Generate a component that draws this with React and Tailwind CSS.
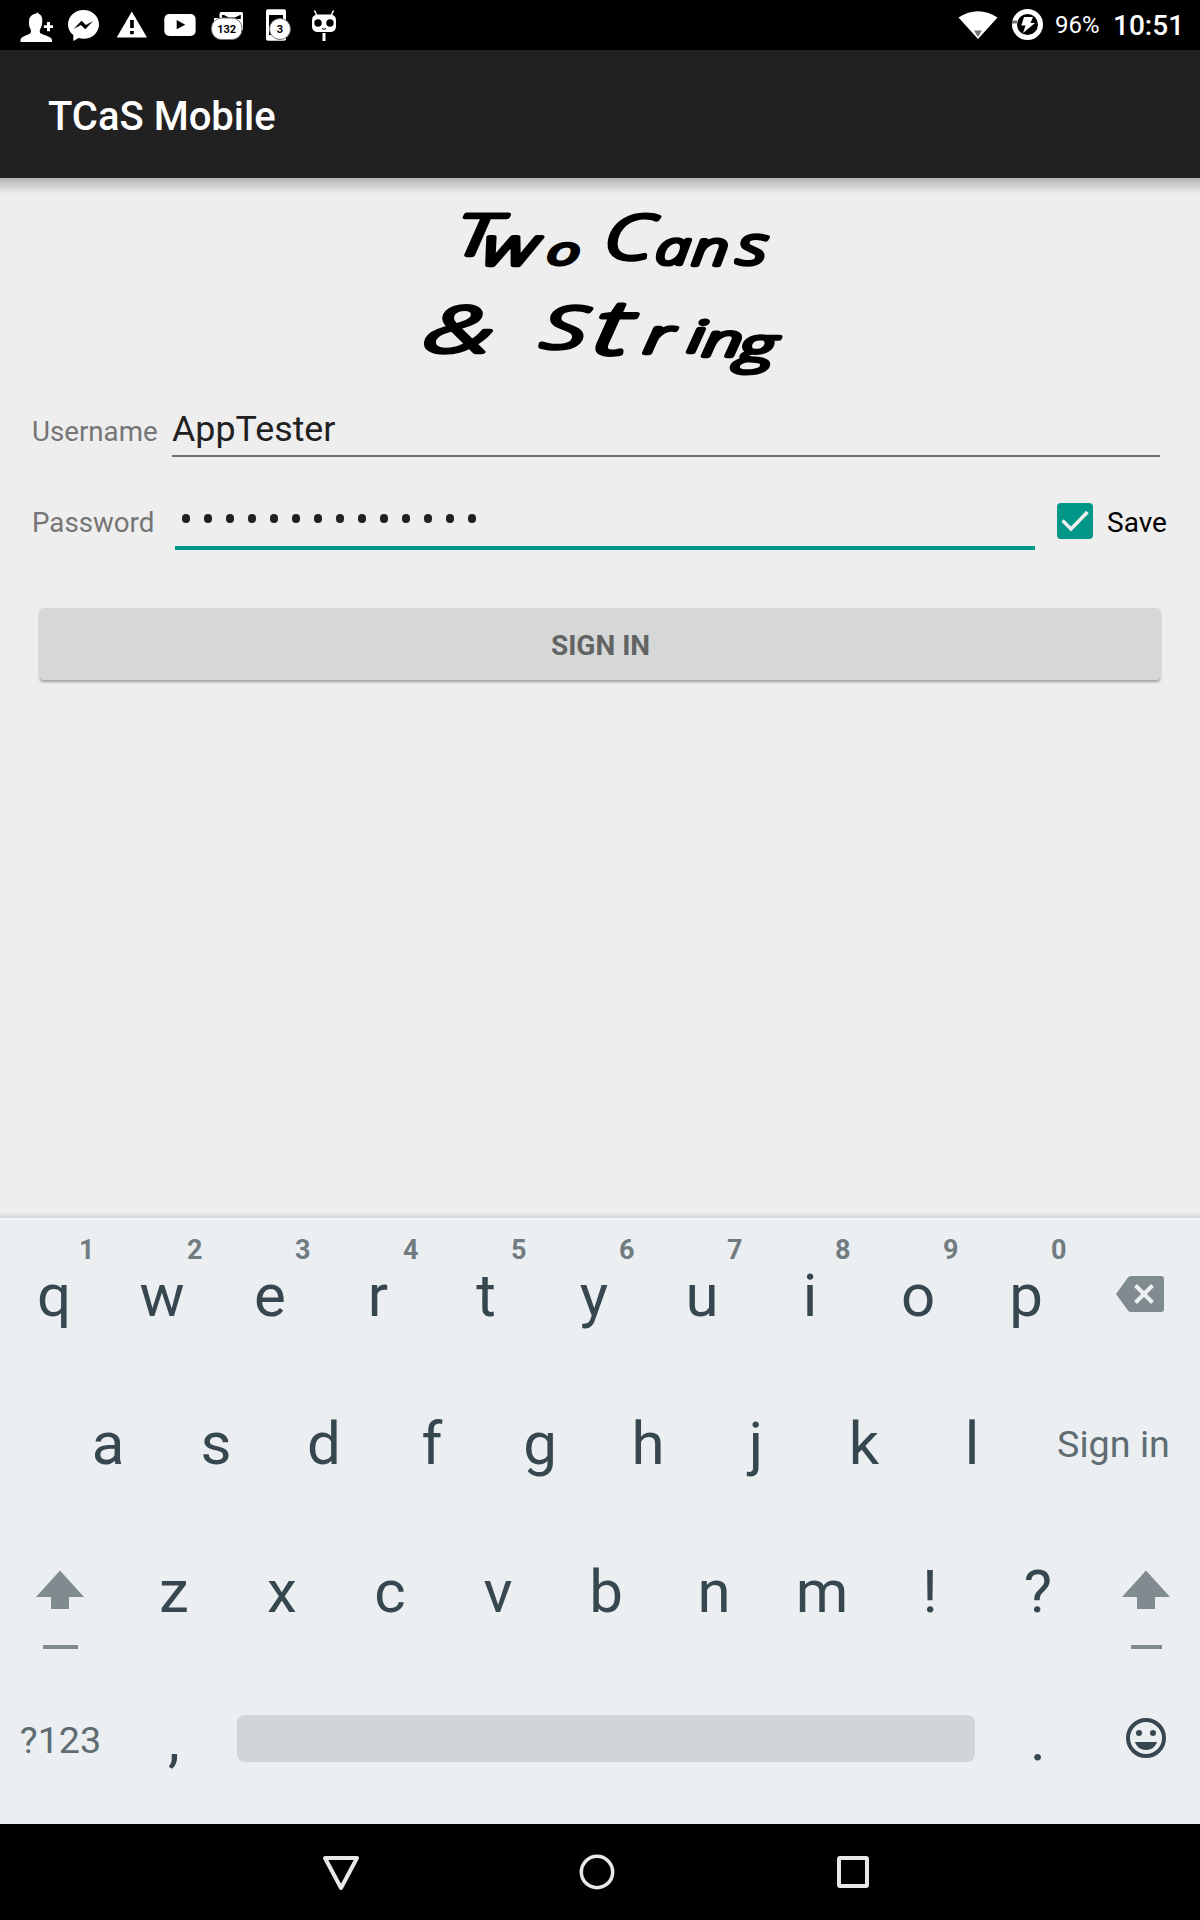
const TOP_ROW = ["q", "w", "e", "r", "t", "y", "u", "i", "o", "p"];
const HOME_ROW = ["a", "s", "d", "f", "g", "h", "j", "k", "l"];
const BOTTOM_ROW = ["z", "x", "c", "v", "b", "n", "m", "!", "?"];

function StatusIcon({ x, children }) {
  return (
    <svg className="h-[50px] w-12 fill-white" viewBox={`${x} 0 48 50`}>
      {children}
    </svg>
  );
}

function StatusBar() {
  return (
    <div className="flex h-[50px] items-center bg-black pl-3 text-white">
      <StatusIcon x={12}>
        <path d="M20.5 42v-2.5c1-3 7-4.500 9.500-6 1.200-.8 1.200-3 .5-4.500-1.200-2-1.700-4.500-1.500-8 .2-4 2.500-6.500 7-7.500l2-1.300.5 1.600c3 .9 4 3.700 3.800 7.200-.1 3-.6 6-2 8-.8 1.500-.8 3.700.5 4.500 3 1.500 10.200 3 11.200 6V42z" />
        <path d="M47 22h3v3.300h3v2.700h-3v3.300h-3V28h-3.200v-2.700H47z" />
      </StatusIcon>
      <StatusIcon x={60}>
        <path d="M83.500 10C74.900 10 68 16.400 68 24.400c0 4.300 2 8.100 5.300 10.700V41l5.400-3c1.500.5 3.100.7 4.800.7 8.600 0 15.500-6.300 15.500-14.300S92.100 10 83.500 10z" />
        <path className="fill-black" d="M73.500 29l8-8.200 4.500 4.200 7-4-7.700 8.200-4.400-4.300z" />
      </StatusIcon>
      <StatusIcon x={108}>
        <path d="M131.800 11.500L147 37.500h-30.300z" />
        <path className="fill-black" d="M130.100 20h3.700v8h-3.700zM130.100 31h3.700v3.300h-3.700z" />
      </StatusIcon>
      <StatusIcon x={156}>
        <rect x="164.300" y="14" width="31.300" height="22" rx="5" />
        <path className="fill-black" d="M176.700 20v9.300l8.500-4.600z" />
      </StatusIcon>
      <StatusIcon x={204}>
        <path d="M221 12h20.500q1.500 0 1.500 1.500V30h-29V18h5.500v-4q0-2 1.500-2z" />
        <path className="fill-black" d="M222 15h2l5 2.500h6l5-2.500h.8v4H222z" />
        <rect x="211.500" y="18" width="30.500" height="21.500" rx="10" className="stroke-neutral-500" strokeWidth="1" />
        <text x="226.700" y="33" textAnchor="middle" className="fill-black text-[11px] font-bold">132</text>
      </StatusIcon>
      <StatusIcon x={252}>
        <rect x="266" y="9.300" width="20" height="31.500" rx="2" />
        <rect x="269" y="15" width="14" height="20" className="fill-black" />
        <circle cx="280" cy="29" r="10.500" className="stroke-neutral-500" />
        <text x="280" y="33" textAnchor="middle" className="fill-black text-[11px] font-bold">3</text>
      </StatusIcon>
      <StatusIcon x={300}>
        <path className="fill-none stroke-white" strokeWidth="1.500" d="M314.500 10.500l2.500 5.500M333.500 10.500L331 16" />
        <rect x="312" y="14.500" width="24" height="17.500" rx="5.500" />
        <circle cx="318" cy="23" r="3.700" className="fill-black" />
        <circle cx="330" cy="23" r="3.700" className="fill-black" />
        <path className="fill-none stroke-black" d="M322 28.500q2 1.500 4 0" />
        <rect x="322.500" y="33" width="3" height="8" />
      </StatusIcon>
      <svg className="ml-auto h-[50px] w-[98px] fill-white" viewBox="952 0 98 50">
        <path d="M958.500 17.500q19.500-12.500 39 0L978 39z" />
        <path className="fill-neutral-500" d="M974 30.500h8L978 37z" />
        <circle cx="1027.500" cy="24.500" r="13" className="fill-none stroke-white" strokeWidth="5" />
        <path className="fill-neutral-500" d="M1012 20.500h5v3h-5z" />
        <path d="M1024 17h9l-2.500 6h4.500l-12 10 2.500-7.500h-4.200z" />
      </svg>
      <span className="ml-[5px] w-[58px] text-[24px] leading-[53px]">96%</span>
      <span className="mr-[16px] w-[71px] whitespace-nowrap text-[28px] font-medium leading-[55px]">10:51</span>
    </div>
  );
}

const WORDS = [
  {
    transform: "translate(138 190) skewX(-7) scale(1.5 1)",
    letters: [["T", -7, -25, 170], ["w", 52, 4, 158], ["o", 181, 1, 112]],
  },
  {
    transform: "translate(587 190) skewX(-5) scale(1.35 1)",
    letters: [["C", -8, -14, 184], ["a", 110, 3, 136], ["n", 191, 5, 140], ["s", 290, 3, 158]],
  },
  {
    transform: "translate(36 457) skewX(-7) scale(1.6 1)",
    letters: [["&", 0, 0, 190]],
  },
  {
    transform: "translate(388 455) skewX(-7) scale(1.55 1)",
    letters: [["S", 0, -10, 172], ["t", 102, 8, 225], ["r", 201, 5, 142], ["i", 286, 2, 130], ["n", 316, 12, 132], ["g", 384, 30, 142]],
  },
];

function Logo() {
  return (
    <svg className="h-[190px] w-[380px] overflow-visible fill-black stroke-black" viewBox="0 0 1140 570" strokeWidth="13" strokeLinejoin="round" strokeLinecap="round" fontFamily="Open Sans, sans-serif" fontStyle="italic" fontWeight="300">
      {WORDS.map((word) => (
        <text key={word.transform} transform={word.transform}>
          {word.letters.map(([glyph, x, y, size]) => (
            <tspan key={x} x={x} y={y} fontSize={size}>{glyph}</tspan>
          ))}
        </text>
      ))}
    </svg>
  );
}

function SignInForm() {
  return (
    <div className="relative h-[1040px] bg-[#eeeeee]">
      <div className="absolute inset-x-0 top-0 h-4 bg-linear-to-b from-black/25 to-transparent" />
      <div className="flex h-[212px] justify-center pt-[22px]">
        <Logo />
      </div>
      <div className="ml-8 mr-10 flex h-[67px] text-[28px]">
        <label className="w-[140px] pt-[9px] text-[27.700px] leading-[66px] text-[#757575]">Username</label>
        <div className="flex-1 border-b-2 border-[#727272] pt-[8px] text-[35.800px] leading-[62px] text-[#212121]">AppTester</div>
      </div>
      <div className="ml-8 flex h-[93px] text-[28px]">
        <label className="w-[143px] pt-[33px] text-[27.700px] leading-[66px] text-[#757575]">Password</label>
        <div className="flex w-[860px] items-center gap-[14px] border-b-4 border-[#009688] pl-[7px] pt-[34px]">
          {Array.from({ length: 14 }, (_, i) => (
            <span key={i} className="h-[9px] w-2 rounded-[4px] bg-[#212121]" />
          ))}
        </div>
        <svg className="ml-[22px] mt-[46px] size-9" viewBox="0 0 36 36">
          <rect width="36" height="36" rx="4" className="fill-[#009688]" />
          <path d="M5.500 17.500l8.500 8.500L30.500 9" className="fill-none stroke-[#eeeeee]" strokeWidth="3.600" />
        </svg>
        <span className="ml-[14px] pt-[33px] leading-[66px] text-black">Save</span>
      </div>
      <button className="ml-10 mt-[58px] block h-[72px] w-[1120px] rounded-[4px] bg-[#d6d8d7] pt-[2px] pl-[1px] text-[28px] font-bold leading-[71px] text-[#616463] shadow-[0_2px_3px_rgba(0,0,0,0.35)]">
        SIGN IN
      </button>
      <div className="absolute inset-x-0 bottom-0 h-[6px] bg-linear-to-b from-transparent to-black/10" />
    </div>
  );
}

function Key({ label, hint }) {
  return (
    <div className="relative w-[108px] shrink-0 text-center">
      {label}
      {hint && (
        <span className="absolute left-[79px] top-[10px] text-[27px] font-bold leading-[36px] text-[#717c81]">{hint}</span>
      )}
    </div>
  );
}

function Shift({ wide }) {
  return (
    <svg className="h-[148px] w-[120px] shrink-0 fill-[#808b8f]" viewBox="0 0 120 148">
      <path d="M60 52.500L84 79H69v12H51V79H36z" />
      {wide ? <rect x="43" y="127" width="35" height="4" /> : <rect x="45" y="127" width="31" height="4" />}
    </svg>
  );
}

function Keyboard() {
  return (
    <div className="h-[606px] border-t-2 border-[#f4f7f9] bg-[#eceff1] pt-[2px] text-[60px] leading-[148px] text-[#37474f]">
      <div className="flex h-[148px]">
        {TOP_ROW.map((k, i) => <Key key={k} label={k} hint={String((i + 1) % 10)} />)}
        <svg className="ml-9 mt-[54px] h-9 w-12" viewBox="0 0 48 36">
          <path className="fill-[#808b8f]" d="M12 1.500Q13 0 15 0h30q3 0 3 3v30q0 3-3 3H15q-2 0-3-1.500L0 18z" />
          <path className="fill-none stroke-[#eceff1]" strokeWidth="4" d="M19.500 9.500l17 17M36.500 9.500l-17 17" />
        </svg>
      </div>
      <div className="flex h-[148px] pl-[54px]">
        {HOME_ROW.map((k) => <Key key={k} label={k} />)}
        <span className="w-[174px] pl-px text-center text-[37.700px] text-[#5f6c72]">Sign in</span>
      </div>
      <div className="flex h-[148px]">
        <Shift wide />
        {BOTTOM_ROW.map((k) => <Key key={k} label={k} />)}
        <div className="-ml-[6px]"><Shift /></div>
      </div>
      <div className="flex h-[148px]">
        <span className="w-[120px] pl-px text-center text-[37.700px] text-[#5f6c72]">?123</span>
        <Key label="," />
        <div className="ml-[9px] mt-[49px] h-[47px] w-[738px] rounded-[8px] bg-[#d1d5d7]" />
        <div className="ml-[9px]"><Key label="." /></div>
        <svg className="ml-[34px] mt-[52px] size-10" viewBox="0 0 40 40">
          <circle cx="20" cy="20" r="18" className="fill-none stroke-[#37474f]" strokeWidth="4" />
          <g className="fill-[#37474f]">
            <circle cx="13" cy="15" r="3" />
            <circle cx="27" cy="15" r="3" />
            <path d="M9 24h22c-1.500 5-6 8-11 8s-9.500-3-11-8z" />
          </g>
        </svg>
      </div>
    </div>
  );
}

function NavigationBar() {
  return (
    <div className="flex h-24 items-center bg-black pl-[321px]">
      <svg className="h-10 w-10 fill-none stroke-[#e8e8e8]" viewBox="0 0 40 40" strokeWidth="4" strokeLinejoin="round">
        <path d="M4 6h32L20 36z" />
      </svg>
      <svg className="ml-[216px] h-10 w-10 fill-none stroke-[#e8e8e8]" viewBox="0 0 40 40" strokeWidth="3.500">
        <circle cx="20" cy="20" r="15.700" />
      </svg>
      <svg className="ml-[216px] h-10 w-10 fill-none stroke-[#e8e8e8]" viewBox="0 0 40 40" strokeWidth="4" strokeLinejoin="round">
        <rect x="6" y="6" width="28" height="28" rx="1" />
      </svg>
    </div>
  );
}

export default function App() {
  return (
    <div className="w-[1200px] overflow-hidden font-[Roboto,sans-serif]">
      <StatusBar />
      <header className="h-32 bg-[#212121] pl-12 text-[40px] font-medium leading-[134px] text-white">TCaS Mobile</header>
      <SignInForm />
      <Keyboard />
      <NavigationBar />
    </div>
  );
}
